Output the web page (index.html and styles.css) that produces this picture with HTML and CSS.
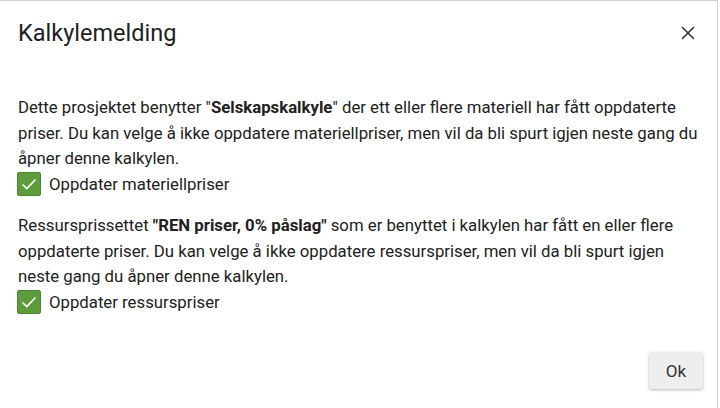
FILE: index.html
```html
<!DOCTYPE html>
<html lang="no">
<head>
  <meta charset="UTF-8" />
  <meta name="viewport" content="width=device-width, initial-scale=1.0" />
  <title>Kalkylemelding</title>
  <link rel="stylesheet" href="styles.css">
</head>
<body>

<!-- Dialog: price update notice -->
<div class="dialog">
  <div class="dialog-header">
    <h2 class="dialog-title">Kalkylemelding</h2>
    <button class="close-btn" type="button" aria-label="Lukk">
      <svg width="14" height="14" viewBox="0 0 14 14">
        <path d="M1 1 L13 13 M13 1 L1 13" stroke="#333" stroke-width="1.6" fill="none" />
      </svg>
    </button>
  </div>

  <div class="dialog-body">
    <div class="section">
      <p>Dette prosjektet benytter "<b>Selskapskalkyle</b>" der ett eller flere materiell har fått oppdaterte priser. Du kan velge å ikke oppdatere materiellpriser, men vil da bli spurt igjen neste gang du åpner denne kalkylen.</p>
      <label class="check-row">
        <span class="check-box">
          <svg width="20" height="20" viewBox="0 0 20 20">
            <path d="M3.5 10.5 L7.8 14.5 L16.5 5.5" stroke="#fff" stroke-width="1.7" fill="none" />
          </svg>
        </span>
        Oppdater materiellpriser
      </label>
    </div>

    <div class="section">
      <p>Ressursprissettet <b>"REN priser, 0% påslag"</b> som er benyttet i kalkylen har fått en eller flere oppdaterte priser. Du kan velge å ikke oppdatere ressurspriser, men vil da bli spurt igjen neste gang du åpner denne kalkylen.</p>
      <label class="check-row">
        <span class="check-box">
          <svg width="20" height="20" viewBox="0 0 20 20">
            <path d="M3.5 10.5 L7.8 14.5 L16.5 5.5" stroke="#fff" stroke-width="1.7" fill="none" />
          </svg>
        </span>
        Oppdater ressurspriser
      </label>
    </div>
  </div>

  <div class="dialog-footer">
    <button class="ok-btn" type="button">Ok</button>
  </div>
</div>

</body>
</html>
```

FILE: styles.css
```css
/* =========================
   General Page Styling
   ========================= */
body {
  font-family: Roboto, "Liberation Sans", Arial, sans-serif;
  background-color: #fff;
  color: #212121;
  margin: 0;
  padding: 0;
}

/* =========================
   Dialog Frame
   ========================= */
.dialog {
  width: 718px;
  height: 408px;
  box-sizing: border-box;
  border-top: 1px solid #cfcfcf;
  border-right: 1px solid #cfcfcf;
  display: flex;
  flex-direction: column;
}

.dialog-header {
  display: flex;
  justify-content: space-between;
  align-items: center;
  padding: 16px 22px 0 18px;
}

.dialog-title {
  margin: 0;
  font-size: 23.5px;
  font-weight: 400;
  line-height: 32px;
}

.close-btn {
  background: none;
  border: none;
  padding: 0;
  width: 14px;
  height: 14px;
  display: flex;
  cursor: pointer;
}

/* =========================
   Dialog Body
   ========================= */
.dialog-body {
  padding: 46px 12px 0 18px;
  font-size: 16.75px;
  line-height: 25.5px;
}

.section {
  margin-bottom: 16px;
}

.section p {
  margin: 0;
}

.check-row {
  display: flex;
  align-items: center;
  gap: 8px;
  height: 25.5px;
}

.check-box {
  width: 22px;
  height: 22px;
  background-color: #5c9c3c;
  border: 1px solid #4b8530;
  border-radius: 2px;
  display: flex;
  align-items: center;
  justify-content: center;
  margin-left: -1px;
}

/* =========================
   Dialog Footer
   ========================= */
.dialog-footer {
  margin-top: auto;
  display: flex;
  justify-content: flex-end;
  padding: 0 14px 19px 0;
}

.ok-btn {
  background-color: #eeeeee;
  color: #333;
  border: none;
  height: 37px;
  padding: 0 17px;
  font-family: inherit;
  font-size: 17px;
  border-radius: 4px;
  box-shadow: 0 1px 3px rgba(0, 0, 0, 0.3);
  cursor: pointer;
}
```
